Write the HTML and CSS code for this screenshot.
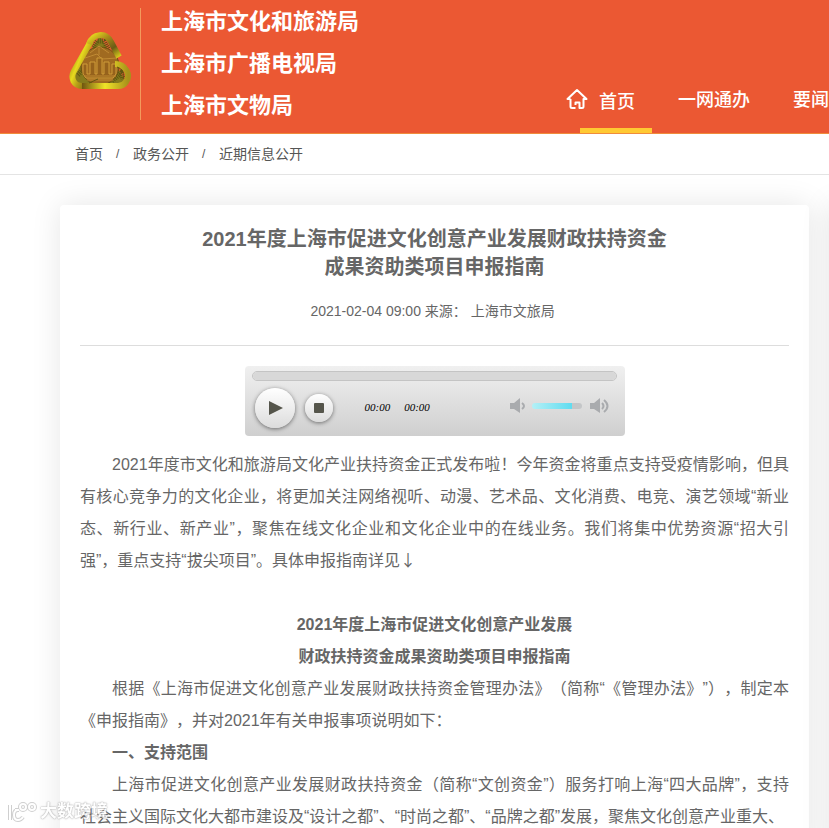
FILE: index.html
```html
<!DOCTYPE html>
<html lang="zh-CN">
<head>
    <meta charset="UTF-8">
    <meta name="viewport" content="width=device-width, initial-scale=1">
    <title>2021年度上海市促进文化创意产业发展财政扶持资金成果资助类项目申报指南</title>
    <link rel="stylesheet" href="styles.css">
</head>
<body>
    <header class="header">
        <a class="brand" href="#">
            <svg class="emblem" viewBox="0 0 64 60" aria-hidden="true">
                <defs>
                    <linearGradient id="goldLeft" x1="0" y1="0" x2="1" y2="1">
                        <stop offset="0" stop-color="#7a5c10"/>
                        <stop offset=".4" stop-color="#e6da1e"/>
                        <stop offset=".6" stop-color="#b8a018"/>
                        <stop offset="1" stop-color="#6e5510"/>
                    </linearGradient>
                    <linearGradient id="goldRight" x1="0" y1="0" x2="1" y2="1">
                        <stop offset="0" stop-color="#ece01e"/>
                        <stop offset=".35" stop-color="#a88c1a"/>
                        <stop offset=".7" stop-color="#6b5a16"/>
                        <stop offset="1" stop-color="#d8cc1c"/>
                    </linearGradient>
                    <linearGradient id="goldBottom" x1="0" y1="0" x2="1" y2="0">
                        <stop offset="0" stop-color="#6e5410"/>
                        <stop offset=".5" stop-color="#f0e428"/>
                        <stop offset="1" stop-color="#a8921a"/>
                    </linearGradient>
                </defs>
                <path d="M32 5L56 48L54 54H9L5 46Z" fill="#857a1c"/>
                <path d="M25 16l4-6h7l4 8M10 44l6-6 6 12M44 50l9-8 2 6" fill="none" stroke="#5e5612" stroke-width="5" stroke-dasharray="1 1"/>
                <circle cx="32" cy="35" r="19" fill="#a06a20" stroke="#6a5010"/>
                <path d="M22 22l9-7 10 7M31 15v9M17 27l12-4 5 5 15-1" fill="none" stroke="#c08a34"/>
                <path d="M15 43V33h4v10h3V31h5v12h2V27h5v16h2V31h5v12h3V33h4v10l-3 4H18z" fill="#96621c" stroke="#cf9c38"/>
                <path d="M16 45h32M19 49h26" stroke="#c08a30"/>
                <path d="M23 10L6 40C2 47 6 55 14 55H17" fill="none" stroke="url(#goldLeft)" stroke-width="6"/>
                <path d="M21 13C25 2 38 1 43 11L51 26" fill="none" stroke="url(#goldRight)" stroke-width="6"/>
                <path d="M47 33C58 33 63 44 58 51C56 54 54 55 50 55H14" fill="none" stroke="url(#goldBottom)" stroke-width="6"/>
                <path d="M49 36C55 38 57 43 55 48M21 52L30 48" fill="none" stroke="#655510"/>
            </svg>
            <span class="divider"></span>
            <span class="brand-names">
                <span>上海市文化和旅游局</span>
                <span>上海市广播电视局</span>
                <span>上海市文物局</span>
            </span>
        </a>
        <nav class="nav">
            <a class="nav-home" href="#">
                <svg class="home-icon" viewBox="0 0 22 22" aria-hidden="true">
                    <path d="M4.500 11H1.500L11 2 20.500 11H17.500V18.500Q17.500 20 16 20H13.500V14.500H9.500V17M4.500 11V18.500Q4.500 20 6 20H9.500"/>
                </svg>
                首页
            </a>
            <a href="#">一网通办</a>
            <a href="#">要闻动态</a>
        </nav>
    </header>

    <nav class="breadcrumb">
        <a href="#">首页</a>
        <span>/</span>
        <a href="#">政务公开</a>
        <span>/</span>
        <a href="#">近期信息公开</a>
    </nav>

    <main class="main">
        <article class="card">
            <h1>2021年度上海市促进文化创意产业发展财政扶持资金<br>成果资助类项目申报指南</h1>
            <p class="meta">2021-02-04 09:00 来源： 上海市文旅局&nbsp;</p>

            <div class="player">
                <progress class="track" value="0" max="100" aria-label="播放进度"></progress>
                <div class="controls">
                    <button class="play" type="button" aria-label="播放">
                        <svg viewBox="0 0 14 14"><path d="M0 0L14 7 0 14Z"/></svg>
                    </button>
                    <button class="stop" type="button" aria-label="停止">
                        <svg viewBox="0 0 10 10"><rect width="10" height="10" rx="1"/></svg>
                    </button>
                    <div class="times">
                        <span>00:00</span>
                        <span>00:00</span>
                    </div>
                    <div class="volume">
                        <svg class="speaker" viewBox="0 0 20 16" aria-hidden="true">
                            <path class="cone" d="M0 5H4L10 0V15L4 11H0Z"/>
                            <path class="wave" d="M12 5q4 3 0 6"/>
                        </svg>
                        <input class="volume-range" type="range" min="0" max="100" value="80" aria-label="音量">
                        <svg class="speaker" viewBox="0 0 20 16" aria-hidden="true">
                            <path class="cone" d="M0 5H4L10 0V15L4 11H0Z"/>
                            <path class="wave" d="M12 5q3 3 0 6M14 2q7 6 0 12"/>
                        </svg>
                    </div>
                </div>
            </div>

            <div class="content">
                <p>2021年度市文化和旅游局文化产业扶持资金正式发布啦！今年资金将重点支持受疫情影响，但具有核心竞争力的文化企业，将更加关注网络视听、动漫、艺术品、文化消费、电竞、演艺领域“新业态、新行业、新产业”，聚焦在线文化企业和文化企业中的在线业务。我们将集中优势资源“招大引强”，重点支持“拔尖项目”。具体申报指南详见<span class="arrow">↓</span></p>
                <h2>2021年度上海市促进文化创意产业发展<br>财政扶持资金成果资助类项目申报指南</h2>
                <p>根据《上海市促进文化创意产业发展财政扶持资金管理办法》（简称“《管理办法》”），制定本《申报指南》，并对2021年有关申报事项说明如下：</p>
                <h3>一、支持范围</h3>
                <p>上海市促进文化创意产业发展财政扶持资金（简称“文创资金”）服务打响上海“四大品牌”，支持社会主义国际文化大都市建设及“设计之都”、“时尚之都”、“品牌之都”发展，聚焦文化创意产业重大、</p>
            </div>
        </article>
        <aside class="card"></aside>
    </main>

    <div class="watermark">
        <svg viewBox="0 0 32 22" aria-hidden="true">
            <path class="edge" d="M4 4V19M9 9H13M17 16Q15 19 12 19Q8 19 8 14Q8 9 12 9M14 6a3 3 0 1 0 6 0a3 3 0 1 0-6 0M23 6a3 3 0 1 0 6 0a3 3 0 1 0-6 0"/>
            <path class="fill" d="M4 4V19M9 9H13M17 16Q15 19 12 19Q8 19 8 14Q8 9 12 9M14 6a3 3 0 1 0 6 0a3 3 0 1 0-6 0M23 6a3 3 0 1 0 6 0a3 3 0 1 0-6 0"/>
        </svg>
        <span>大数跨境</span>
    </div>
</body>
</html>
```

FILE: styles.css
```css
* {
    box-sizing: border-box;
}

html {
    overflow: hidden;
}

body {
    margin: 0;
    overflow: hidden;
    font-family: "Liberation Sans", "Noto Sans CJK SC", sans-serif;
    font-size: 16px;
    color: #666;
    background-color: #fff;
    text-spacing-trim: space-all;
}

a {
    color: inherit;
    text-decoration: none;
}

/* 页头 */
.header {
    display: flex;
    justify-content: space-between;
    height: 134px;
    padding-left: 68px;
    overflow: hidden;
    color: #fff;
    background-color: #eb5833;
    border-bottom: 1px solid #f08c3c;
}

.brand {
    display: flex;
    flex: none;
}

.emblem {
    width: 64px;
    height: 60px;
    margin: 31px 8px 0 0;
}

.divider {
    width: 1px;
    height: 112px;
    margin: 8px 20px 0 0;
    background-color: #f39a5c;
}

.brand-names {
    display: flex;
    flex-direction: column;
    padding-top: 1px;
    font-size: 22px;
    font-weight: bold;
    line-height: 42px;
}

.nav {
    display: flex;
    flex: none;
    gap: 43px;
    margin-right: -36px;
    padding-top: 86px;
    font-size: 18px;
    line-height: 28px;
    font-weight: 500;
}

.nav-home {
    position: relative;
    display: flex;
    gap: 11px;
    padding-top: 2px;
}

.nav-home::after {
    content: "";
    position: absolute;
    left: 14px;
    bottom: 0;
    width: 72px;
    height: 5px;
    background-color: #ffc933;
}

.home-icon {
    width: 22px;
    height: 22px;
    fill: none;
    stroke: #fff;
    stroke-width: 2;
    stroke-linejoin: round;
}

/* 面包屑 */
.breadcrumb {
    display: flex;
    gap: 13px;
    height: 41px;
    padding-left: 75px;
    font-size: 14px;
    line-height: 40px;
    color: #555;
    border-bottom: 1px solid #e4e4e4;
}

.breadcrumb span {
    width: 4px;
    font-size: 12px;
}

/* 正文卡片 */
.main {
    display: grid;
    grid-template-columns: 1fr 300px;
    gap: 20px;
    margin: 30px -300px 0 60px;
}

.card {
    padding: 20px;
    background-color: #fff;
    border-radius: 4px;
    box-shadow: 0 0 30px rgba(0, 0, 0, 0.1);
}

h1 {
    margin: 0;
    font-size: 20px;
    line-height: 28px;
    text-align: center;
}

.meta {
    margin: 16px 0 20px;
    padding-bottom: 20px;
    font-size: 14px;
    line-height: 28px;
    text-align: center;
    border-bottom: 1px solid #ddd;
}

/* 播放器 */
.player {
    width: 380px;
    max-width: 100%;
    height: 70px;
    margin: 0 auto 13px;
    padding: 5px 8px 0 7px;
    background: linear-gradient(#f0f0f0, #cfcfcf);
    border-radius: 4px;
}

.track {
    display: block;
    width: 100%;
    height: 10px;
    appearance: none;
    border: 1px solid #c4c4c4;
    border-radius: 5px;
    background-color: #d8d8d8;
    overflow: hidden;
}

.track::-webkit-progress-bar {
    background-color: #d8d8d8;
}

.controls {
    display: flex;
    align-items: center;
    height: 54px;
    padding: 0 7px 0 3px;
}

.play,
.stop {
    display: flex;
    flex: none;
    align-items: center;
    justify-content: center;
    padding: 0;
    border: none;
    border-radius: 50%;
    background: linear-gradient(#fff, #dcdcdc);
    box-shadow: 0 1px 4px rgba(0, 0, 0, 0.5);
    fill: #55554b;
    cursor: pointer;
}

.play {
    width: 40px;
    height: 40px;
    margin-right: 10px;
}

.play svg {
    width: 14px;
    height: 14px;
    margin-left: 2px;
}

.stop {
    width: 28px;
    height: 28px;
}

.stop svg {
    width: 10px;
    height: 10px;
}

.times {
    display: flex;
    gap: 14px;
    margin-left: 32px;
    padding-bottom: 3px;
    font-family: "Liberation Serif", serif;
    font-size: 11px;
    font-style: italic;
    color: #000;
}

.volume {
    display: flex;
    align-items: center;
    margin-left: auto;
    padding-bottom: 4px;
}

.speaker {
    width: 20px;
    height: 16px;
}

.cone {
    fill: #a9abae;
}

.wave {
    fill: none;
    stroke: #a9abae;
    stroke-width: 2;
}

.volume-range {
    width: 50px;
    height: 6px;
    margin: 0 8px 0 2px;
    appearance: none;
    border-radius: 3px;
    background: linear-gradient(to right, #b4f0f6, #5fdcf0 80%, #c4c6c8 80%);
}

.volume-range::-webkit-slider-thumb {
    appearance: none;
    width: 1px;
    height: 6px;
}

/* 文章内容 */
.content {
    line-height: 32px;
}

.content p {
    margin: 0;
    text-indent: 2em;
    text-align: justify;
}

.arrow {
    font-family: "Noto Sans CJK SC", sans-serif;
    line-height: 1;
}

h2 {
    margin: 32px 0 0;
    font-size: 16px;
    line-height: 32px;
    text-align: center;
}

h3 {
    margin: 0;
    font-size: 16px;
    line-height: 32px;
    text-indent: 2em;
}

/* 水印 */
.watermark {
    position: fixed;
    left: 6px;
    bottom: 4px;
    display: flex;
    align-items: center;
    gap: 2px;
    font-size: 17px;
    font-weight: bold;
    line-height: 24px;
    color: #fff;
    text-shadow: 0 0 2px #999, 0 0 1px #999;
    opacity: 0.8;
}

.watermark svg {
    width: 32px;
    height: 22px;
    fill: none;
}

.edge {
    stroke: #c4c4c4;
    stroke-width: 4;
}

.fill {
    stroke: #fff;
    stroke-width: 2;
}
```
